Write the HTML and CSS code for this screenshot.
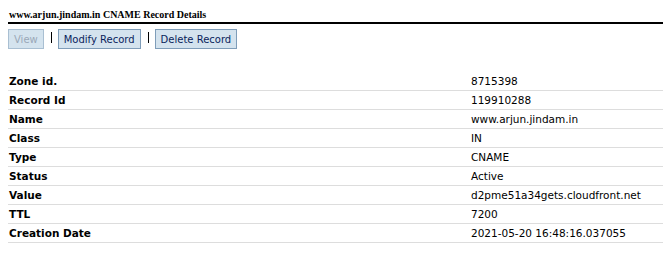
FILE: index.html
```html
<!DOCTYPE html>
<html>
  <head>
    <title>CNAME Record Details</title>
    <link rel="stylesheet" href="styles.css">
  </head>
  <body>
    <h2 class="title">www.arjun.jindam.in CNAME Record Details</h2>
    <div class="actions">
      <button class="btn" disabled>View</button>
      <span class="sep"></span>
      <button class="btn">Modify Record</button>
      <span class="sep"></span>
      <button class="btn">Delete Record</button>
    </div>
    <table class="details">
      <tr><th>Zone id.</th><td>8715398</td></tr>
      <tr><th>Record Id</th><td>119910288</td></tr>
      <tr><th>Name</th><td>www.arjun.jindam.in</td></tr>
      <tr><th>Class</th><td>IN</td></tr>
      <tr><th>Type</th><td>CNAME</td></tr>
      <tr><th>Status</th><td>Active</td></tr>
      <tr><th>Value</th><td>d2pme51a34gets.cloudfront.net</td></tr>
      <tr><th>TTL</th><td>7200</td></tr>
      <tr><th>Creation Date</th><td>2021-05-20 16:48:16.037055</td></tr>
    </table>
  </body>
</html>
```

FILE: styles.css
```css
body {
  margin: 0;
  padding: 8px 0 0 8px;
  font-family: "DejaVu Sans", Verdana, sans-serif;
  font-size: 10.5px;
  color: #000000;
  background-color: #FFFFFF;
}
.title {
  font-family: "Liberation Serif", "Times New Roman", serif;
  font-size: 10px;
  font-weight: bold;
  margin: 0;
  padding: 1px 0 2px 1px;
  border-bottom: 2px solid #000000;
}
.actions {
  display: flex;
  align-items: center;
  margin-top: 5px;
  padding-left: 0;
}
.btn {
  font-family: "DejaVu Sans", Verdana, sans-serif;
  font-size: 10px;
  height: 20px;
  padding: 0 5px;
  margin: 0;
  border: 1px solid #7f9db9;
  background-color: #d4e3ee;
  color: #0a1f5c;
}
.btn:disabled {
  color: #9aa8b8;
  border-color: #a9bfd2;
}
.sep {
  align-self: flex-start;
  width: 1px;
  height: 11px;
  margin: 3px 6px 0 7px;
  background-color: #000000;
}
.details {
  width: 100%;
  border-collapse: collapse;
  margin-top: 23px;
}
.details th,
.details td {
  text-align: left;
  padding: 2px 1px 3px 1px;
  border-bottom: 1px solid #dddddd;
  height: 13px;
}
.details th {
  width: 460px;
}
.details td {
  font-weight: normal;
}
```
